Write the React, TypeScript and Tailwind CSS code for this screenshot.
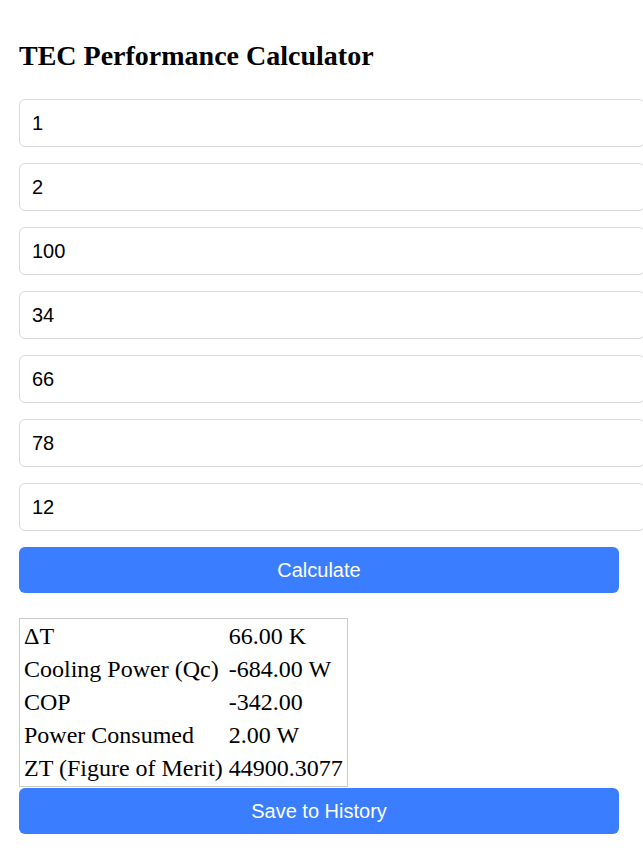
import React from "react";

const values = ["1", "2", "100", "34", "66", "78", "12"];
const rows: [string, string][] = [
  ["ΔT", "66.00 K"],
  ["Cooling Power (Qc)", "-684.00 W"],
  ["COP", "-342.00"],
  ["Power Consumed", "2.00 W"],
  ["ZT (Figure of Merit)", "44900.3077"],
];

export default function App() {
  return (
    <div className="w-[643px] h-[856px] overflow-hidden bg-white pl-[19px] pt-[40px]">
      <h2 className="m-0 h-[32px] text-[28px] leading-[32px] font-bold text-black [font-family:'Liberation_Serif',serif]">
        TEC Performance Calculator
      </h2>
      <div className="mt-[27px] flex flex-col gap-[16px]">
        {values.map((v, i) => (
          <input
            key={i}
            defaultValue={v}
            type="text"
            className="box-border w-[626px] h-[48px] shrink-0 rounded-[6px] border border-[#d9d9d9] px-[12px] text-[20px] text-black outline-none [font-family:'Liberation_Sans',Arial,sans-serif]"
          />
        ))}
      </div>
      <button className="mt-[16px] w-[600px] h-[46px] rounded-[6px] bg-[#3b7dff] text-white text-[20px] [font-family:'Liberation_Sans',Arial,sans-serif]">
        Calculate
      </button>
      <table className="mt-[25px] border border-[#cccccc] border-separate border-spacing-[2px] text-[24px] leading-[29px] text-black [font-family:'Liberation_Serif',serif]">
        <tbody>
          {rows.map(([k, v]) => (
            <tr key={k}>
              <td className="px-[2px] py-[1px] whitespace-nowrap">{k}</td>
              <td className="px-[2px] py-[1px] whitespace-nowrap">{v}</td>
            </tr>
          ))}
        </tbody>
      </table>
      <button className="mt-[1px] block w-[600px] h-[46px] rounded-[6px] bg-[#3b7dff] text-white text-[20px] [font-family:'Liberation_Sans',Arial,sans-serif]">
        Save to History
      </button>
    </div>
  );
}
